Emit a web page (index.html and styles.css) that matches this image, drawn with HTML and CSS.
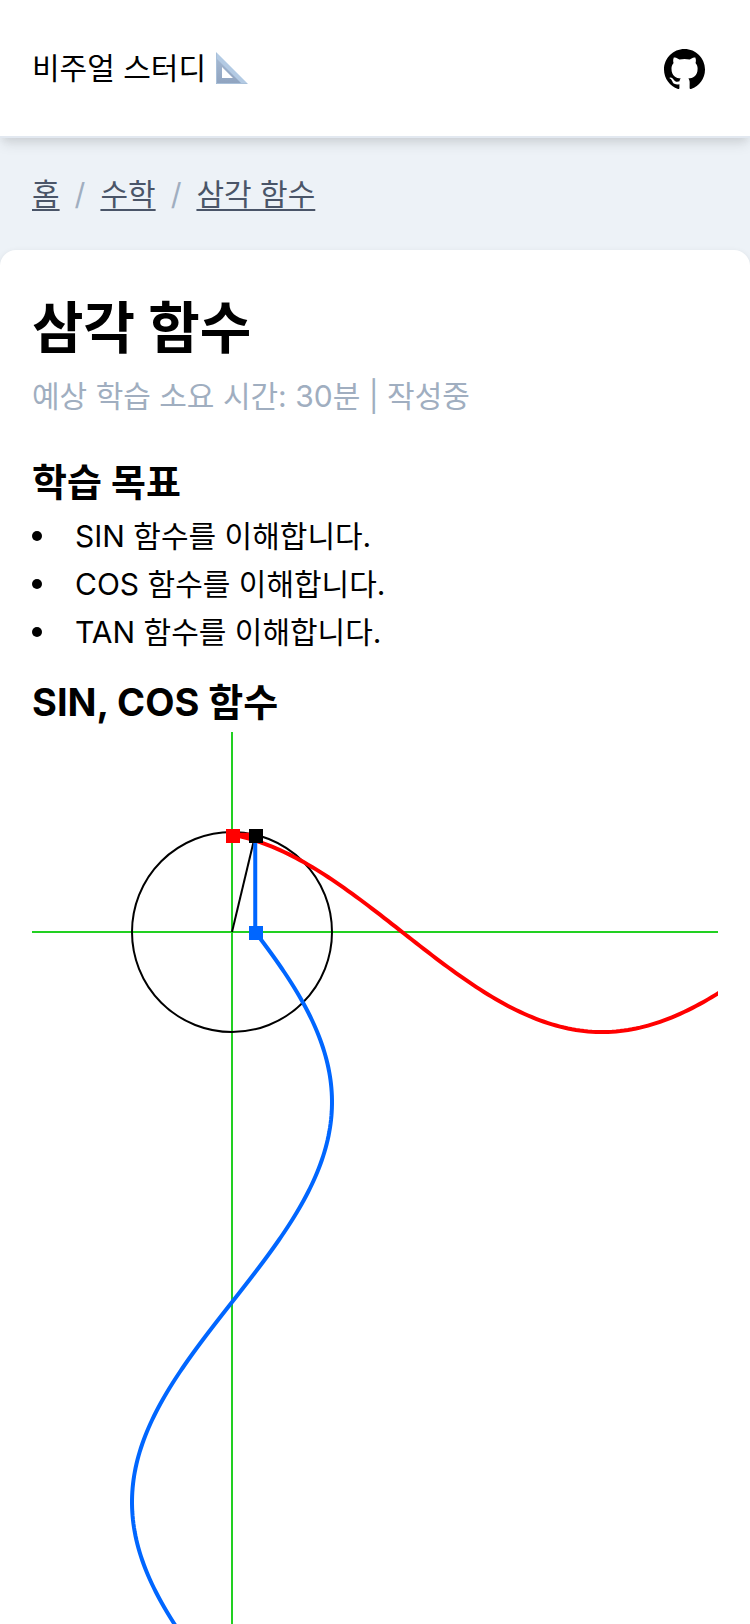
FILE: index.html
```html
<!DOCTYPE html>
<html lang="ko">
<head>
<meta charset="utf-8">
<meta name="viewport" content="width=device-width, initial-scale=1">
<title>삼각 함수 - 비주얼 스터디</title>
<link rel="stylesheet" href="styles.css">
</head>
<body>
<header class="site-header">
  <a class="brand" href="#">
    <span>비주얼 스터디</span>
    <svg class="brand-icon" viewBox="0 0 32 32" aria-hidden="true">
      <defs>
        <linearGradient id="face" x1="0" y1="0" x2="0" y2="1">
          <stop offset="0" stop-color="#a9bdd6"/>
          <stop offset="1" stop-color="#8fa3bf"/>
        </linearGradient>
      </defs>
      <path fill="url(#face)" fill-rule="evenodd" d="M0 0 32 32H0ZM6 15V26H17Z"/>
      <path fill="#b3cae3" d="M0 0 32 32H26L0 6Z"/>
      <path fill="none" stroke="#d3e2f1" stroke-width="1" d="M0 0 32 32"/>
      <path fill="none" stroke="#a9c0d9" stroke-width="1" d="M.5 1V31.5H31"/>
    </svg>
  </a>
  <a class="github" href="#" aria-label="GitHub">
    <svg class="github-icon" viewBox="0 0 16 16" aria-hidden="true">
      <path d="M8 0C3.58 0 0 3.58 0 8c0 3.54 2.29 6.53 5.47 7.59.4.07.55-.17.55-.38 0-.19-.01-.82-.01-1.49-2.01.37-2.53-.49-2.69-.94-.09-.23-.48-.94-.82-1.13-.28-.15-.68-.52-.01-.53.63-.01 1.08.58 1.23.82.72 1.21 1.87.87 2.33.66.07-.52.28-.87.51-1.07-1.78-.2-3.64-.89-3.64-3.95 0-.87.31-1.59.82-2.15-.08-.2-.36-1.02.08-2.12 0 0 .67-.21 2.2.82.64-.18 1.32-.27 2-.27s1.36.09 2 .27c1.53-1.04 2.2-.82 2.2-.82.44 1.1.16 1.92.08 2.12.51.56.82 1.27.82 2.15 0 3.07-1.87 3.75-3.65 3.95.29.25.54.73.54 1.48 0 1.07-.01 1.93-.01 2.2 0 .21.15.46.55.38A8.01 8.01 0 0 0 16 8c0-4.42-3.58-8-8-8z"/>
    </svg>
  </a>
</header>
<nav class="breadcrumb" aria-label="breadcrumb">
  <a href="#">홈</a>
  <span class="separator">/</span>
  <a href="#">수학</a>
  <span class="separator">/</span>
  <a href="#">삼각 함수</a>
</nav>
<main class="card">
  <h1>삼각 함수</h1>
  <p class="meta">예상 학습 소요 시간: 30분 | 작성중</p>
  <h2>학습 목표</h2>
  <ul class="goals">
    <li>SIN 함수를 이해합니다.</li>
    <li>COS 함수를 이해합니다.</li>
    <li>TAN 함수를 이해합니다.</li>
  </ul>
  <h2>SIN, COS 함수</h2>
  <div class="plot">
    <svg class="plot-canvas" role="img" aria-label="SIN, COS 함수">
      <line class="axis" x1="0" y1="200" x2="100%" y2="200"/>
      <line class="axis" x1="200" y1="0" x2="200" y2="100%"/>
      <circle class="unit" cx="200" cy="200" r="100"/>
      <line class="unit" id="radius"/>
      <path class="wave cos" id="cos"/>
      <path class="wave sin" id="sin"/>
      <rect class="dot-cos" id="dot-cos" width="14" height="14"/>
      <rect class="dot-sin" id="dot-sin" width="14" height="14"/>
      <rect id="dot" width="14" height="14"/>
    </svg>
  </div>
</main>
<script src="plot.js"></script>
</body>
</html>
```
FILE: styles.css
```css
* {
  box-sizing: border-box;
}

body {
  margin: 0;
  min-height: 100vh;
  display: flex;
  flex-direction: column;
  background: #edf2f7;
  color: #000;
  font-family: Inter, "Noto Sans CJK KR", sans-serif;
  font-size: 30px;
  line-height: 48px;
}

h1,
h2,
p,
ul {
  margin: 0;
}

.site-header {
  display: flex;
  align-items: center;
  justify-content: space-between;
  height: 138px;
  padding: 0 44px 0 32px;
  background: #fff;
  border-bottom: 2px solid #e2e8f0;
  box-shadow: 0 8px 12px -2px rgba(0, 0, 0, 0.1), 0 4px 8px -2px rgba(0, 0, 0, 0.06);
}

.brand {
  display: flex;
  align-items: center;
  gap: 10px;
  color: inherit;
  text-decoration: none;
}

.brand-icon {
  width: 32px;
  height: 32px;
}

.github {
  display: flex;
  padding: 2px 1px 0 0;
}

.github-icon {
  width: 41px;
  height: 41px;
}

.breadcrumb {
  display: flex;
  gap: 15px;
  padding: 32px;
  color: #4a5568;
}

.breadcrumb a {
  color: inherit;
  text-underline-offset: 4px;
  text-decoration-thickness: 2px;
}

.separator {
  color: #a0aec0;
}

.card {
  flex: 1;
  display: flex;
  flex-direction: column;
  padding: 34px 32px 0;
  background: #fff;
  border-radius: 16px 16px 0 0;
  box-shadow: 0 2px 6px rgba(0, 0, 0, 0.1);
}

h1 {
  font-size: 56px;
  line-height: 88px;
}

h2 {
  margin-top: 32px;
  font-size: 38px;
  line-height: 60px;
}

.meta {
  color: #a0aec0;
}

.goals {
  padding: 0;
  list-style: none;
}

.goals li {
  display: flex;
  align-items: center;
  gap: 33px;
}

.goals li::before {
  content: "";
  width: 10px;
  height: 10px;
  border-radius: 50%;
  background: #000;
}

.goals + h2 {
  margin-top: 16px;
}

.plot {
  flex: 1;
  display: flex;
  min-height: 400px;
}

.plot-canvas {
  width: 100%;
  overflow: hidden;
}

.axis {
  stroke: #22d022;
  stroke-width: 2;
}

.unit {
  fill: none;
  stroke: #000;
  stroke-width: 2;
}

.wave {
  fill: none;
  stroke-width: 4;
}

.cos {
  stroke: #f00;
}

.sin {
  stroke: #06f;
}

.dot-cos {
  fill: #f00;
}

.dot-sin {
  fill: #06f;
}
```
FILE: plot.js
```js
const ORIGIN = 200;
const RADIUS = 100;
const PERIOD = 800;
const LENGTH = 1600;
const angle = 0.2346;

const px = ORIGIN + RADIUS * Math.sin(angle);
const py = ORIGIN - RADIUS * Math.cos(angle);

function setAttributes(id, attributes) {
  const element = document.getElementById(id);
  for (const [name, value] of Object.entries(attributes)) {
    element.setAttribute(name, value);
  }
}

function wave(start, pointAt) {
  const points = [start];
  for (let d = 0; d <= LENGTH; d += 4) {
    points.push(pointAt(d, angle + (d * 2 * Math.PI) / PERIOD));
  }
  return "M" + points.map((p) => p.join(" ")).join("L");
}

setAttributes("radius", { x1: ORIGIN, y1: ORIGIN, x2: px, y2: py });
setAttributes("cos", {
  d: wave([px, py], (d, a) => [ORIGIN + d, ORIGIN - RADIUS * Math.cos(a)]),
});
setAttributes("sin", {
  d: wave([px, py], (d, a) => [ORIGIN + RADIUS * Math.sin(a), ORIGIN + d]),
});
setAttributes("dot-cos", { x: ORIGIN - 6, y: Math.round(py) - 6 });
setAttributes("dot-sin", { x: Math.round(px) - 6, y: ORIGIN - 6 });
setAttributes("dot", { x: Math.round(px) - 6, y: Math.round(py) - 6 });
```
